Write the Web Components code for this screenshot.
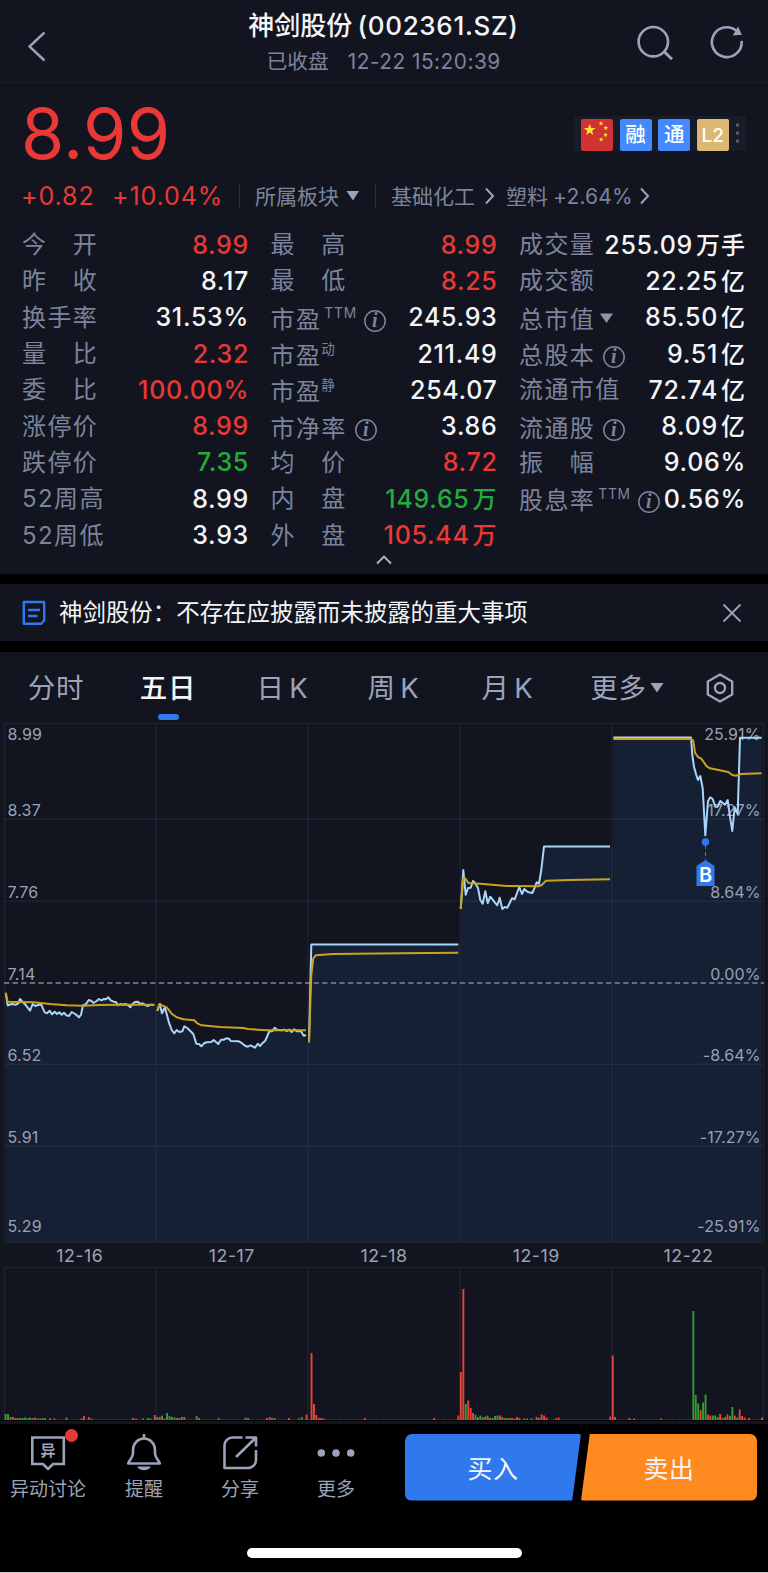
<!DOCTYPE html>
<html lang="zh-CN">
<head>
<meta charset="UTF-8">
<meta name="viewport" content="width=device-width, initial-scale=1.0">
<title>神剑股份 (002361.SZ)</title>
<style>
  * { box-sizing: border-box; }
  body {
    margin: 0;
    background: #000;
    font-family: Inter, "Noto Sans CJK SC", sans-serif;
    --panel: #12151f;
    --muted: #7c849d;
    --icon: #9ba3ba;
    --up: #e93835;
    --down: #22ac3c;
    --blue: #2f78ee;
  }
</style>
</head>
<body>
<stock-page></stock-page>

<script>
// ---------- header ----------
class StockHeader extends HTMLElement {
  connectedCallback() {
    this.attachShadow({ mode: 'open' });
    this.shadowRoot.innerHTML = `
      <style>
        :host {
          display: grid;
          grid-template-columns: 120px 1fr 122px;
          height: 83px;
          background: var(--panel);
          border-bottom: 1px solid #1b1f2a;
          box-sizing: border-box;
        }
        svg { fill: none; stroke: var(--icon); display: block; }
        .back { padding: 31px 0 0 27px; }
        .center { text-align: center; white-space: nowrap; padding-top: 8px; margin-left: 1px; }
        h1 {
          margin: 0;
          font-size: 26px;
          line-height: 36px;
          font-weight: 500;
          color: #f4f5f8;
        }
        .code { margin-left: 5px; letter-spacing: 0.7px; }
        p {
          margin: 0;
          font-size: 20.8px;
          line-height: 36px;
          color: var(--muted);
        }
        p span { margin-left: 19px; letter-spacing: 0.5px; }
        .actions { display: flex; gap: 35px; padding-top: 25px; margin-left: -9px; }
      </style>
      <div class="back">
        <svg width="20" height="32" viewBox="0 0 20 32" stroke-width="2.4"><path d="M17.5 1.5 2.5 15.5l15 14"/></svg>
      </div>
      <div class="center">
        <h1><slot name="title"></slot><span class="code"><slot name="code"></slot></span></h1>
        <p><slot name="status"></slot><span><slot name="time"></slot></span></p>
      </div>
      <div class="actions">
        <svg width="38" height="38" viewBox="0 0 38 38" stroke-width="2.6"><circle cx="16.3" cy="16.7" r="14.7"/><path d="m26.5 26 8.5 8.3" stroke-width="3"/></svg>
        <svg width="36" height="38" viewBox="0 0 36 38" stroke-width="2.6">
          <path d="M31.6 15.8A14.9 14.9 0 1 1 26.6 6"/>
          <path d="m28 1.500 3.900 8.300-9.100.6z" fill="#9ba3ba" stroke="none"/>
        </svg>
      </div>
    `;
  }
}
customElements.define('stock-header', StockHeader);

// ---------- price, badges, sectors ----------
class QuoteSummary extends HTMLElement {
  connectedCallback() {
    this.attachShadow({ mode: 'open' });
    this.shadowRoot.innerHTML = `
      <style>
        :host { display: block; padding: 0 22px; height: 141px; background: var(--panel); box-sizing: border-box; }
        .top { display: flex; justify-content: space-between; height: 93px; }
        .price { color: var(--up); font-size: 70px; line-height: 102px; letter-spacing: 0.300px; margin-left: -1px; }
        .badges {
          display: flex;
          gap: 6.6px;
          background: #181c27;
          height: 35px;
          width: 172px;
          padding: 3px 0 0 7px;
          margin-top: 33px;
          box-sizing: border-box;
        }
        .badge {
          width: 32px;
          height: 32px;
          border-radius: 2px;
          background: #448aff;
          color: #fff;
          font-size: 20.500px;
          line-height: 32px;
          text-align: center;
          font-weight: 500;
          overflow: hidden;
        }
        .flag { background: #d13234; }
        .gold { background: #dcb775; font-size: 19px; line-height: 33px; }
        .row { display: flex; align-items: center; height: 40px; color: var(--muted); font-size: 21px; white-space: nowrap; }
        .row .cn { margin-top: -3px; }
        .delta { color: var(--up); font-size: 25px; letter-spacing: 0.900px; margin-left: -1px; margin-right: 1px; }
        .sep { width: 1px; height: 24px; background: #2a3040; }
        svg { display: block; flex: none; }
      </style>
      <div class="top">
        <div class="price">8.99</div>
        <div class="badges">
          <div class="badge flag">
            <svg width="32" height="32" viewBox="0 0 32 32" fill="#fdde35">
              <path d="m8.7 4.7 1.5 4.2 4.4.1-3.5 2.7 1.2 4.3-3.6-2.5-3.6 2.5 1.2-4.3L2.800 9l4.400-.1z"/>
              <path id="s" d="m20 2 .7 1.500 1.600.1-1.200 1.100.4 1.700-1.500-.9-1.500.9.4-1.700-1.200-1.100 1.600-.1z"/>
              <use href="#s" x="4.800" y="4.500"/><use href="#s" x="4.600" y="11.600"/><use href="#s" x=".2" y="16"/>
            </svg>
          </div>
          <div class="badge">融</div>
          <div class="badge">通</div>
          <div class="badge gold">L2</div>
          <svg width="6" height="32" viewBox="0 0 6 32" fill="#596073"><circle cx="2.500" cy="6" r="1.700"/><circle cx="2.500" cy="14" r="1.700"/><circle cx="2.500" cy="22" r="1.700"/></svg>
        </div>
      </div>
      <div class="row">
        <span class="delta" style="width:91px">+0.82</span>
        <span class="delta" style="width:126px">+10.04%</span>
        <i class="sep"></i>
        <span class="cn" style="margin-left:15px;width:91px">所属板块</span>
        <svg width="14" height="12" viewBox="0 0 14 12"><path d="M.5 1h12.500L7 10.500z" fill="#9ba3ba"/></svg>
        <i class="sep" style="margin-left:15px"></i>
        <span class="cn" style="margin-left:15px;width:94px">基础化工</span>
        <svg width="12" height="18" viewBox="0 0 12 18"><path d="m1 1.500 7 7.500-7 7.500" fill="none" stroke="#9ba3ba" stroke-width="2"/></svg>
        <span class="cn" style="margin-left:9px">塑料</span>
        <span style="margin-left:5px;width:87px;letter-spacing:.2px">+2.64%</span>
        <svg width="12" height="18" viewBox="0 0 12 18"><path d="m1 1.500 7 7.500-7 7.500" fill="none" stroke="#9ba3ba" stroke-width="2"/></svg>
      </div>
    `;
  }
}
customElements.define('quote-summary', QuoteSummary);

// ---------- one label / value pair ----------
class StatItem extends HTMLElement {
  connectedCallback() {
    const sup = this.getAttribute('sup');
    const tone = this.getAttribute('tone') || 'flat';
    const unit = this.getAttribute('unit');
    const low = sup || this.hasAttribute('info') || this.hasAttribute('menu');
    this.attachShadow({ mode: 'open' });
    this.shadowRoot.innerHTML = `
      <style>
        :host { display: flex; justify-content: space-between; height: 36.3px; line-height: 36.3px; white-space: nowrap; }
        .label { display: flex; color: var(--muted); font-size: 24px; letter-spacing: 1.400px; padding-top: 0.500px; margin-bottom: -0.500px; }
        .low { padding-top: 2.500px; margin-bottom: -2.500px; }
        sup { font-size: 13.500px; line-height: 22px; letter-spacing: 0.2px; margin-left: 0; vertical-align: top; }
        sup.latin { font-size: 13.800px; letter-spacing: 0.800px; margin-left: 3px; }
        .value { font-size: 25px; font-weight: 550; color: #f4f5f8; letter-spacing: 0.700px; margin-right: -1px; }
        .unit { font-size: 24px; font-weight: 500; margin-left: 3px; letter-spacing: 1px; }
        .up { color: var(--up); }
        .down { color: var(--down); }
        svg { margin: 7px 0 0 7px; flex: none; }
        svg.menu { margin-left: 5px; }
        sup.latin + svg { margin-left: 6px; }
        text { font: italic bold 20px "Liberation Serif", serif; }
      </style>
      <span class="label ${low ? 'low' : ''}"><slot></slot>${sup ? `<sup class="${sup === 'TTM' ? 'latin' : ''}">${sup}</sup>` : ''}
        ${this.hasAttribute('info') ? '<svg width="24" height="24" viewBox="0 0 24 24"><circle cx="12" cy="12" r="10.200" fill="none" stroke="#7c849d" stroke-width="1.500"/><text x="9" y="18" fill="#7c849d" letter-spacing="0">i</text></svg>' : ''}
        ${this.hasAttribute('menu') ? '<svg class="menu" width="14" height="20" viewBox="0 0 14 20"><path d="M0 4.500h13L6.500 14z" fill="#8d95ad"/></svg>' : ''}
      </span>
      <span class="value ${tone}">${this.getAttribute('value')}${unit ? `<span class="unit">${unit}</span>` : ''}</span>
    `;
  }
}
customElements.define('stat-item', StatItem);

class StatGrid extends HTMLElement {
  connectedCallback() {
    this.attachShadow({ mode: 'open' });
    this.shadowRoot.innerHTML = `
      <style>
        :host { display: block; background: var(--panel); height: 350px; padding: 2.700px 22px 0; box-sizing: border-box; }
        .grid { display: grid; grid-template-columns: repeat(3, 226px); column-gap: 22.500px; height: 327px; }
        svg { display: block; margin: 1.500px auto 0; }
      </style>
      <div class="grid">
        <div>
          <stat-item value="8.99" tone="up">今　开</stat-item>
          <stat-item value="8.17">昨　收</stat-item>
          <stat-item value="31.53%">换手率</stat-item>
          <stat-item value="2.32" tone="up">量　比</stat-item>
          <stat-item value="100.00%" tone="up">委　比</stat-item>
          <stat-item value="8.99" tone="up">涨停价</stat-item>
          <stat-item value="7.35" tone="down">跌停价</stat-item>
          <stat-item value="8.99">52周高</stat-item>
          <stat-item value="3.93">52周低</stat-item>
        </div>
        <div>
          <stat-item value="8.99" tone="up">最　高</stat-item>
          <stat-item value="8.25" tone="up">最　低</stat-item>
          <stat-item value="245.93" sup="TTM" info>市盈</stat-item>
          <stat-item value="211.49" sup="动">市盈</stat-item>
          <stat-item value="254.07" sup="静">市盈</stat-item>
          <stat-item value="3.86" info>市净率</stat-item>
          <stat-item value="8.72" tone="up">均　价</stat-item>
          <stat-item value="149.65" unit="万" tone="down">内　盘</stat-item>
          <stat-item value="105.44" unit="万" tone="up">外　盘</stat-item>
        </div>
        <div>
          <stat-item value="255.09" unit="万手">成交量</stat-item>
          <stat-item value="22.25" unit="亿">成交额</stat-item>
          <stat-item value="85.50" unit="亿" menu>总市值</stat-item>
          <stat-item value="9.51" unit="亿" info>总股本</stat-item>
          <stat-item value="72.74" unit="亿">流通市值</stat-item>
          <stat-item value="8.09" unit="亿" info>流通股</stat-item>
          <stat-item value="9.06%">振　幅</stat-item>
          <stat-item value="0.56%" sup="TTM" info>股息率</stat-item>
        </div>
      </div>
      <svg width="16" height="10" viewBox="0 0 16 10"><path d="m1 8.500 7-7 7 7" fill="none" stroke="#b4bacb" stroke-width="1.800"/></svg>
    `;
  }
}
customElements.define('stat-grid', StatGrid);

// ---------- announcement ----------
class NoticeBar extends HTMLElement {
  connectedCallback() {
    this.attachShadow({ mode: 'open' });
    this.shadowRoot.innerHTML = `
      <style>
        :host { display: flex; align-items: center; height: 57px; margin: 10px 0 11px; padding: 0 26px 0 22px; background: var(--panel); box-sizing: border-box; }
        p { margin: 0 auto 0 13px; color: #f4f5f8; font-size: 23.450px; line-height: 57px; white-space: nowrap; }
        svg { fill: none; display: block; }
      </style>
      <svg width="24" height="26" viewBox="0 0 24 26" stroke="#2f78ee" stroke-width="2.400"><path d="M1.800 2h20.400v18.500l-3.200 3.300H1.800zM6 10h12M6 16h9.500" stroke-linejoin="round"/></svg>
      <p><slot></slot></p>
      <svg width="20" height="20" viewBox="0 0 20 20" stroke="#9ba3ba" stroke-width="1.800"><path d="m1.500 1.500 17 17m0-17-17 17"/></svg>
    `;
  }
}
customElements.define('notice-bar', NoticeBar);

// ---------- period tabs ----------
class PeriodTabs extends HTMLElement {
  connectedCallback() {
    this.attachShadow({ mode: 'open' });
    this.shadowRoot.innerHTML = `
      <style>
        :host {
          display: grid;
          grid-template-columns: 112px 112px 117px 105px 123px 116px 70px;
          height: 68px;
          background: var(--panel);
          font-size: 27.500px;
          color: var(--icon);
        }
        div { display: flex; flex-direction: column; align-items: center; line-height: 73px; white-space: nowrap; letter-spacing: 0.8px; }
        .k { word-spacing: -4px; }
        .active { color: #f4f5f8; font-weight: 500; }
        .active::after { content: ""; width: 21px; height: 6px; border-radius: 3px; background: var(--blue); margin-top: -11px; }
        .more { flex-direction: row; justify-content: center; align-items: flex-start; gap: 3px; }
        .more svg { margin-top: 30px; }
        .gear { padding-top: 19.500px; }
      </style>
      <div>分时</div>
      <div class="active">五日</div>
      <div class="k">日 K</div>
      <div class="k">周 K</div>
      <div class="k">月 K</div>
      <div class="more">更多<svg width="14" height="12" viewBox="0 0 14 12"><path d="M.5 1h13L7 10.500z" fill="#9ba3ba"/></svg></div>
      <div class="gear"><svg width="30" height="32" viewBox="0 0 30 32" fill="none" stroke="#9ba3ba" stroke-width="2.400"><path d="m15 2.500 12.200 7v13L15 29.500l-12.200-7v-13z" stroke-linejoin="round"/><circle cx="15" cy="16" r="5"/></svg></div>
    `;
  }
}
customElements.define('period-tabs', PeriodTabs);

// ---------- five day chart ----------
// price and average line of each trading day, in chart units
const DAYS = [
  {
    price: '5.7,993 7.7,1005.3 11.7,1004 16,1004.7 18.3,1003.3 20,999 22.7,1002 26,1005.3 30,1010.7 32.7,1004 35.3,1006 38.7,1004.7 41.3,1004.7 44.7,1012.3 47,1013.3 49.7,1010.7 52,1014.3 54.7,1011.7 57,1014 59.3,1012.3 61.7,1014.7 64,1012.7 66.3,1015.3 69,1016 71.7,1012 75.3,1014 79,1017.3 81,1014.7 83,1005.3 86,1004 88.7,1000 91.7,1001 93.3,1003 96.7,1001 99,999 101.3,1000.3 104,999 106,999.3 108.3,997.3 110.7,1000.3 113.7,1001.7 116,1002 117.7,1005.3 120,1004 122.7,1004.7 125,1004 128,1005 130.3,1007.3 132.7,1003.7 135,1002 138,1001.7 140,1004 142.7,1003.3 145.3,1005 147.7,1006 150.7,1004.7 154.3,1005',
    avg: '5.7,992.7 7.7,1001.7 16.7,1002 33.3,1002.3 50,1004 66.7,1005.3 83.3,1005.7 100,1005 120,1004.7 154.3,1004.7'
  },
  {
    price: '157.3,1011 159.7,1004 162,1013.3 164.7,1007.3 166.7,1014 169,1022.7 171.7,1030 174.3,1033.3 176.7,1030 179.3,1032 182.3,1031.3 184.3,1026.3 187.3,1028 190,1030.7 193.3,1034 196.3,1043.7 199,1044 201.3,1046.3 204,1043.3 206.7,1042.3 211.3,1042 213.7,1040 216,1042 218.3,1044 221,1039.7 224,1039.7 226.3,1038.3 229,1038.7 230.7,1041 238.7,1041.3 241.3,1042.7 245,1045.7 247.7,1046.7 250.7,1045.3 255,1047.7 257.7,1043.7 260,1046 262.3,1043.3 265.3,1040.7 267.3,1036 269.3,1031.3 272.3,1031.3 274.7,1027.7 277.3,1029.7 281.7,1030.3 284.3,1029.7 286.7,1031 289.3,1029.7 291.7,1032 294.3,1029.3 296.7,1031.3 301,1031.3 303.7,1035.7 306,1035',
    avg: '157.3,1011 159.7,1003.7 162,1005.3 166.7,1007.3 171.7,1013.7 176.7,1017.3 183.3,1019.3 194.3,1020.3 197.3,1023.3 201.7,1025.3 220,1027 243.3,1028 248.3,1029 266.7,1030.3 306,1030.3'
  },
  {
    price: '309,1042.3 311.3,944.5 458.3,944.5',
    avg: '309,1042.3 311.3,975 313.3,958.3 315.7,955.3 333,954 400,953.3 458.3,952.7'
  },
  {
    price: '460.7,909 463.3,870 465.7,894.7 468,888 470.7,887.7 473,881 475.3,883.3 478,888 480.3,900 482.7,903.7 485.3,891.3 487.7,903 490.3,896.7 495,902.7 497.3,905.3 499.7,897.7 502.3,909 504.7,907 507.3,907.7 512,898.3 514.7,899.3 519.3,887 522,894 524.3,889 527.7,892 532.3,893 534.7,887.7 536.7,882.3 539,883.7 541.3,870 544,846.5 610,846.5',
    avg: '460.7,909 463.3,878 465.7,878.7 468.3,883 483.3,884 506.7,886 538.3,886.3 541.7,885 546,880.7 570,880 610,879.3'
  },
  {
    price: '613.3,737.5 691,737.5 692.3,755 694,766.7 696.3,775 698,780 700.3,776 702.7,788.3 705.3,835.3 708,801 710.3,797.3 712.7,799 715.3,806.7 717.7,806.7 720.3,801 725,804.7 727.7,800 730,816.7 732.3,831 734.7,807.3 737.7,814 740,737.7 761.7,737.7',
    avg: '613.3,738.9 691.3,738.9 693.3,740.7 695,752.7 698,757 701.3,758.7 706.7,766.3 710,768.3 728.3,772 732.3,775 736,775.7 740.7,774 761.7,773.3'
  }
];

const DATES = ['12-16', '12-17', '12-18', '12-19', '12-22'];
const GRID_X = [4.5, 156, 308, 460, 612, 763.5];
const LEVELS = [
  ['8.99', '25.91%', 740], ['8.37', '17.27%', 815.5], ['7.76', '8.64%', 898], ['7.14', '0.00%', 979.5],
  ['6.52', '-8.64%', 1061], ['5.91', '-17.27%', 1142.5], ['5.29', '-25.91%', 1232]
];

// [x, height, colour], r = red, g = green
const BARS = [
  [5.5, 6, 'g'], [8, 6, 'g'], [10.4, 3, 'r'], [12.9, 3, 'r'], [15.3, 2, 'g'], [17.7, 2, 'r'], [20.2, 2, 'g'], [22.6, 2, 'g'],
  [25, 2.5, 'g'], [27.5, 2, 'g'], [30, 2.5, 'g'], [32.5, 2, 'r'], [35, 2.5, 'g'], [37.5, 1.5, 'r'], [40, 1.5, 'r'], [42.5, 2, 'g'], [45, 2, 'g'],
  [50, 1.5, 'r'], [54.5, 1.5, 'r'], [66.5, 2.5, 'g'], [81.5, 1.5, 'r'], [84, 4, 'r'], [88.8, 3, 'r'], [91.5, 1.5, 'r'],
  [133, 2, 'r'], [136, 1.5, 'r'], [143, 1.5, 'g'], [148, 2, 'g'], [150.5, 1.5, 'g'], [154.7, 5, 'r'], [157.2, 3, 'g'], [159.6, 3, 'r'], [162, 4.5, 'g'],
  [164.5, 1.5, 'r'], [167, 7, 'g'], [169.5, 4, 'g'], [172, 3, 'g'], [174.5, 2.5, 'g'], [177, 2, 'r'], [179.4, 2, 'g'], [181.8, 3, 'g'], [184.3, 3, 'r'],
  [196.5, 4, 'g'], [199, 2, 'g'], [218.5, 2, 'g'], [245.5, 2.5, 'g'], [248, 2, 'g'], [267, 2, 'r'], [269.7, 3, 'r'], [272, 2, 'g'], [274.6, 2, 'r'],
  [289, 2, 'r'], [299, 1.5, 'g'], [301.7, 3, 'g'], [306.5, 5.5, 'r'], [311.5, 67, 'r'], [313.9, 16, 'r'], [316.3, 5, 'r'], [318.8, 2, 'r'], [321.2, 2, 'r'], [323.6, 1.5, 'r'],
  [365, 2, 'r'], [434, 2, 'r'], [458.3, 4.5, 'r'], [460.8, 48, 'r'], [463.3, 131, 'r'], [465.7, 16, 'g'], [468.2, 19.5, 'r'], [470.6, 12, 'r'], [473, 7, 'r'],
  [475.5, 5, 'g'], [477.9, 3, 'g'], [480.3, 4.5, 'g'], [482.7, 3, 'g'], [485.2, 3.5, 'r'], [487.6, 4.5, 'g'], [490, 2, 'r'], [492.5, 2, 'g'],
  [495, 4, 'g'], [497.4, 4.5, 'g'], [499.9, 4.5, 'r'], [502.3, 3, 'g'], [504.7, 2, 'r'], [507.2, 2, 'g'], [509.6, 2, 'r'], [512, 2, 'r'], [514.5, 1.5, 'g'], [517, 3, 'r'], [519.5, 2, 'r'],
  [524, 1.5, 'r'], [527, 1.5, 'g'], [531.5, 1.5, 'g'], [536.6, 3, 'r'], [539, 2, 'g'], [541.5, 5.5, 'r'], [544, 4.5, 'r'], [546.4, 2.5, 'r'], [556, 1.5, 'r'], [558.5, 2.5, 'r'],
  [610.2, 3.5, 'r'], [612.7, 64.5, 'r'], [615, 3, 'r'], [629.5, 2, 'r'], [634, 1.5, 'r'], [661, 1.5, 'r'],
  [693.3, 109, 'g'], [695.7, 25, 'g'], [698.2, 16.5, 'g'], [700.6, 10, 'r'], [703, 17.5, 'g'], [705.5, 25.5, 'g'], [707.9, 5.5, 'r'], [710.3, 4.5, 'r'], [712.8, 4.5, 'g'], [715.2, 4.5, 'g'], [717.7, 3, 'g'], [720.1, 6, 'r'],
  [722.5, 2, 'r'], [725, 3, 'g'], [727.4, 5.5, 'r'], [729.9, 4, 'g'], [732.3, 13, 'g'], [734.7, 4.5, 'r'], [737.2, 2.5, 'g'], [739.6, 10.5, 'r'], [742, 4, 'r'], [744.5, 2.5, 'r'], [749, 2, 'r'], [762, 2.5, 'r']
];

class FiveDayChart extends HTMLElement {
  connectedCallback() {
    const areas = DAYS.map(d => {
      const pts = d.price.split(' ');
      const first = pts[0].split(',')[0];
      const last = pts[pts.length - 1].split(',')[0];
      return `<polygon points="${first},1242 ${d.price} ${last},1242"/>`;
    }).join('');
    this.attachShadow({ mode: 'open' });
    this.shadowRoot.innerHTML = `
      <style>
        :host { display: block; height: 701px; background: var(--panel); border-bottom: 1px solid #000; box-sizing: border-box; }
        svg { display: block; }
        .grid { stroke: #7b90b8; stroke-opacity: 0.1; stroke-width: 1.4; fill: none; }
        .area { fill: #152034; }
        .lines { fill: none; stroke-width: 2; stroke-linejoin: round; }
        .level { fill: #9aa1b5; font-size: 16px; letter-spacing: 0.2px; }
        .date { fill: #9aa1b5; font-size: 17.8px; text-anchor: middle; letter-spacing: 0.5px; }
        .end { text-anchor: end; letter-spacing: 0.1px; }
      </style>
      <svg width="768" height="700" viewBox="0 720 768 700">
        <g class="area">${areas}<path d="M154 1005h4v237h-4zM305.5 1042h4v200h-4zM458 944.5h2.5V1242H458zM609.5 846.5h4V1242h-4z"/></g>
        <g class="grid">
          <path d="M4 723.5h760M4 819.3h760M4 901.3h760M4 1064.3h760M4 1145.7h760M4 1242.3h760M4 1267.5h760M4 1419.5h760"/>
          ${GRID_X.map(x => `<path d="M${x} 723.5V1242M${x} 1267.5V1420"/>`).join('')}
        </g>
        <path d="M4 983h760" stroke="#636b80" stroke-width="1.9" stroke-dasharray="5.3 3.3"/>
        ${LEVELS.map(([l, r, y]) => `<text class="level" x="7.5" y="${y}">${l}</text><text class="level end" x="760.5" y="${y}">${r}</text>`).join('')}
        <g class="lines">
          ${DAYS.map(d => `<polyline points="${d.price}" stroke="#a9d5fb"/><polyline points="${d.avg}" stroke="#c9a31d"/>`).join('')}
        </g>
        <circle cx="705.5" cy="842" r="3.7" fill="#2f78ee"/>
        <path d="M705.5 845v15" stroke="#2f78ee" stroke-dasharray="4 3"/>
        <path d="m705.5 860 9 6v20h-18v-20z" fill="#2f78ee"/>
        <text x="705.6" y="882" fill="#fff" font-size="20" font-weight="600" text-anchor="middle">B</text>
        ${DATES.map((d, i) => `<text class="date" x="${79.7 + i * 152.2}" y="1262">${d}</text>`).join('')}
        <path d="M5 1419.3h757" stroke="#8f3030" stroke-width=".8" stroke-dasharray="1.6 .9 1.6 3.3" opacity=".7"/>
        ${BARS.map(([x, h, c]) => `<rect x="${x - 0.9}" y="${1420 - h}" width="1.9" height="${h}" fill="${c === 'r' ? '#e8433a' : '#349c35'}"/>`).join('')}
      </svg>
    `;
  }
}
customElements.define('five-day-chart', FiveDayChart);

// ---------- bottom toolbar ----------
class ToolItem extends HTMLElement {
  connectedCallback() {
    this.attachShadow({ mode: 'open' });
    this.shadowRoot.innerHTML = `
      <style>
        :host { display: flex; flex-direction: column; align-items: center; width: 96px; color: var(--icon); font-size: 19px; line-height: 28px; white-space: nowrap; position: relative; }
        ::slotted(svg) { display: block; margin-bottom: 3px; }
        .dot { position: absolute; left: 64.5px; top: 0; width: 13px; height: 13px; border-radius: 50%; background: #e53935; }
      </style>
      <slot></slot><span>${this.getAttribute('label')}</span>
      ${this.hasAttribute('dot') ? '<i class="dot"></i>' : ''}
    `;
  }
}
customElements.define('tool-item', ToolItem);

class TradeBar extends HTMLElement {
  connectedCallback() {
    this.attachShadow({ mode: 'open' });
    this.shadowRoot.innerHTML = `
      <style>
        :host { display: block; height: 152px; border-top: 3px solid #11141d; background: #000; box-sizing: border-box; border-bottom: 1px solid #c8c8c8; }
        .bar { display: flex; height: 124px; padding-top: 5px; box-sizing: border-box; }
        .icon { fill: none; stroke: var(--icon); stroke-width: 2.6; }
        .buttons { display: flex; margin: 5px 0 0 21px; height: 66.5px; }
        button { border: 0; padding: 0; width: 176px; height: 66.5px; color: #f4f5f8; font: 400 25px/64px "Noto Sans CJK SC", sans-serif; letter-spacing: 0.5px; }
        .buy { background: var(--blue); border-radius: 7px 2px 2px 7px; clip-path: polygon(0 0, 100% 0, 95% 100%, 0 100%); }
        .sell { background: #ff8a20; border-radius: 2px 7px 7px 2px; clip-path: polygon(5% 0, 100% 0, 100% 100%, 0 100%); }
        .home { width: 275px; height: 10px; border-radius: 5px; background: #fff; margin: 0 auto; }
      </style>
      <div class="bar">
        <tool-item label="异动讨论" dot>
          <svg class="icon" width="38" height="44" viewBox="0 0 38 44"><path d="M3.3 8.5h31.5V35H24l-5 5-5-5H3.3z"/><text x="19" y="27" fill="#9ba3ba" stroke="none" font-size="15" font-weight="700" text-anchor="middle">异</text></svg>
        </tool-item>
        <tool-item label="提醒">
          <svg class="icon" width="38" height="44" viewBox="0 0 38 44"><path d="M19 5v5M8 24.5V21a11 11.5 0 0 1 22 0v3.5c0 4 3.5 6 4.800 10H3.200C4.500 30.500 8 28.500 8 24.500z" stroke-linejoin="round"/><path d="M12.200 37.500h13.600c-2 5-11.600 5-13.600 0z" fill="#9ba3ba" stroke="none"/></svg>
        </tool-item>
        <tool-item label="分享">
          <svg class="icon" width="38" height="44" viewBox="0 0 38 44"><path d="M21.5 8.500H11.500a8 8 0 0 0-8 8v22.500h23.500a8 8 0 0 0 8-8v-10M15 28 34 9.500M24.500 8.500H35v9" stroke-linejoin="round"/></svg>
        </tool-item>
        <tool-item label="更多">
          <svg width="38" height="44" viewBox="0 0 38 44" fill="#9ba3ba"><circle cx="4.3" cy="24" r="3.800"/><circle cx="19" cy="24" r="3.800"/><circle cx="33.700" cy="24" r="3.800"/></svg>
        </tool-item>
        <div class="buttons">
          <button class="buy">买入</button>
          <button class="sell">卖出</button>
        </div>
      </div>
      <div class="home"></div>
    `;
  }
}
customElements.define('trade-bar', TradeBar);

class StockPage extends HTMLElement {
  connectedCallback() {
    this.attachShadow({ mode: 'open' });
    this.shadowRoot.innerHTML = `
      <style>
        :host { display: flex; flex-direction: column; width: 768px; height: 1573px; overflow: hidden; }
        :host > * { flex: none; }
      </style>
      <stock-header>
        <span slot="title">神剑股份</span>
        <span slot="code">(002361.SZ)</span>
        <span slot="status">已收盘</span>
        <span slot="time">12-22 15:20:39</span>
      </stock-header>
      <quote-summary></quote-summary>
      <stat-grid></stat-grid>
      <notice-bar>神剑股份：不存在应披露而未披露的重大事项</notice-bar>
      <period-tabs></period-tabs>
      <five-day-chart></five-day-chart>
      <trade-bar></trade-bar>
    `;
  }
}
customElements.define('stock-page', StockPage);
</script>
</body>
</html>
